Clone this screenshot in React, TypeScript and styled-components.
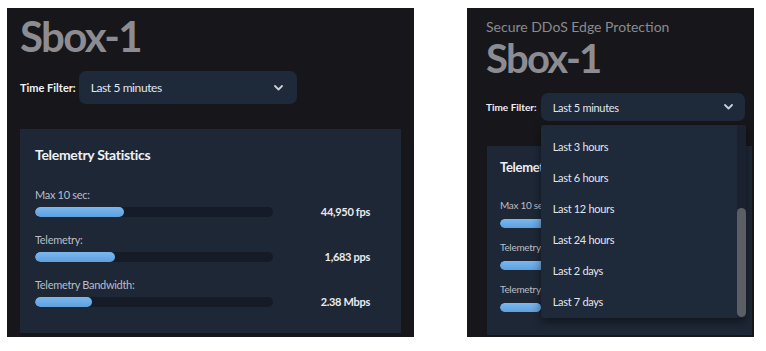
import styled, { createGlobalStyle } from "styled-components";

const GlobalStyle = createGlobalStyle`
	body {
		margin: 0;
		background: #ffffff;
		font-family: Lato, "Open Sans", sans-serif;
	}
`;

type Size = { $compact?: boolean };

// the dropdown in the screenshot is scrolled down to these
const OPTIONS = ["Last 3 hours", "Last 6 hours", "Last 12 hours", "Last 24 hours", "Last 2 days", "Last 7 days"];

const STATS = [
	{ label: "Max 10 sec:", value: "44,950 fps", fill: 37.4 },
	{ label: "Telemetry:", value: "1,683 pps", fill: 33.6 },
	{ label: "Telemetry Bandwidth:", value: "2.38 Mbps", fill: 24 },
];

const Chevron = () => (
	<svg width="9" height="6" viewBox="0 0 9 6" fill="none">
		<polyline points="1,1 4.5,4.5 8,1" stroke="#c9ced8" strokeWidth="1.8" strokeLinecap="round" strokeLinejoin="round" />
	</svg>
);

const OptionList = () => (
	<Menu>
		<MenuList>
			{OPTIONS.map(o => (
				<MenuItem key={o}>{o}</MenuItem>
			))}
		</MenuList>
		<ScrollTrack>
			<ScrollThumb />
		</ScrollTrack>
	</Menu>
);

const Dashboard = ({ compact, open }: { compact?: boolean; open?: boolean }) => (
	<Panel $compact={compact}>
		{compact && <Subtitle>Secure DDoS Edge Protection</Subtitle>}
		<Title $compact={compact}>Sbox-1</Title>
		<FilterRow $compact={compact}>
			<FilterLabel $compact={compact}>Time Filter:</FilterLabel>
			<SelectWrap>
				<Select $compact={compact}>
					<span>Last 5 minutes</span>
					<Chevron />
				</Select>
				{open && <OptionList />}
			</SelectWrap>
		</FilterRow>
		<Card $compact={compact}>
			<CardTitle $compact={compact}>Telemetry Statistics</CardTitle>
			<Stats $compact={compact}>
				{STATS.map(s => (
					<Stat key={s.label} $compact={compact}>
						<StatLabel $compact={compact}>{s.label}</StatLabel>
						<BarLine $compact={compact}>
							<Track $compact={compact}>
								<Fill style={{ width: `${s.fill}%` }} />
							</Track>
							<Value $compact={compact}>{s.value}</Value>
						</BarLine>
					</Stat>
				))}
			</Stats>
		</Card>
	</Panel>
);

const App = () => (
	<>
		<GlobalStyle />
		<Page>
			<Dashboard />
			<Dashboard compact open />
		</Page>
	</>
);

export default App;

const Page = styled.div`
	display: flex;
	gap: 53px;
	padding: 8px 0 0 7px;
`;

const Panel = styled.div<Size>`
	display: flex;
	flex-direction: column;
	box-sizing: border-box;
	width: ${p => (p.$compact ? 287 : 407)}px;
	height: 329px;
	padding: ${p => (p.$compact ? "12px 2px 2px 19px" : "3px 13px 0")};
	background: #17171b;
	overflow: hidden;
`;

const Subtitle = styled.div`
	font-size: 14px;
	line-height: 14px;
	color: #8a8a90;
`;

const Title = styled.h1<Size>`
	margin: 0;
	padding-right: 4px;
	font-size: ${p => (p.$compact ? 40 : 42)}px;
	line-height: 1.2;
	font-weight: 700;
	letter-spacing: -1.7px;
	color: #8c8c92;
`;

const FilterRow = styled.div<Size>`
	display: flex;
	align-items: center;
	gap: ${p => (p.$compact ? 4 : 3)}px;
	margin-top: ${p => (p.$compact ? 11 : 10)}px;
`;

const FilterLabel = styled.span<Size>`
	font-size: ${p => (p.$compact ? 10 : 11)}px;
	font-weight: 700;
	color: #eef0f3;
`;

const SelectWrap = styled.div`
	position: relative;
`;

const Select = styled.div<Size>`
	display: flex;
	align-items: center;
	justify-content: space-between;
	box-sizing: border-box;
	width: ${p => (p.$compact ? 204 : 218)}px;
	height: ${p => (p.$compact ? 28 : 33)}px;
	padding: 0 ${p => (p.$compact ? 12 : 14)}px 0 12px;
	border-radius: 7px;
	background: #1e293a;
	font-size: ${p => (p.$compact ? 11 : 12)}px;
	letter-spacing: ${p => (p.$compact ? -0.3 : -0.4)}px;
	color: #e3e6eb;
`;

const Menu = styled.div`
	position: absolute;
	top: 32px;
	left: 0;
	z-index: 5;
	width: 205px;
	height: 193px;
	background: #1e293a;
	border-radius: 3px;
	box-shadow: 0 4px 10px rgba(0, 0, 0, 0.45);
	overflow: hidden;
`;

const MenuList = styled.ul`
	margin: 0;
	padding: 6px 0 0;
	list-style: none;
`;

const MenuItem = styled.li`
	height: 31px;
	line-height: 31px;
	padding-left: 12px;
	font-size: 11px;
	letter-spacing: -0.3px;
	color: #e3e6eb;
`;

const ScrollTrack = styled.div`
	position: absolute;
	top: 0;
	right: 0;
	bottom: 0;
	width: 9px;
	background: #1a2230;
`;

const ScrollThumb = styled.div`
	position: absolute;
	right: 0;
	bottom: 1px;
	width: 9px;
	height: 109px;
	border-radius: 5px;
	background: #5b5e65;
`;

const Card = styled.div<Size>`
	box-sizing: border-box;
	width: ${p => (p.$compact ? "auto" : "381px")};
	flex: ${p => (p.$compact ? 1 : "none")};
	margin: ${p => (p.$compact ? "25px 0 0 1px" : "25px 0 0")};
	padding: ${p => (p.$compact ? "13px 20px 0 13px" : "17px 31px 24px 15px")};
	background: #1e2736;
`;

const CardTitle = styled.div<Size>`
	font-size: ${p => (p.$compact ? 13 : 14)}px;
	line-height: ${p => (p.$compact ? 16 : 17)}px;
	font-weight: 700;
	letter-spacing: -0.3px;
	color: #eef0f3;
`;

const Stats = styled.div<Size>`
	display: flex;
	flex-direction: column;
	gap: ${p => (p.$compact ? 12 : 14)}px;
	margin-top: ${p => (p.$compact ? 24 : 24.5)}px;
`;

const Stat = styled.div<Size>`
	display: flex;
	flex-direction: column;
	gap: ${p => (p.$compact ? 6 : 4)}px;
`;

const StatLabel = styled.div<Size>`
	font-size: ${p => (p.$compact ? 10 : 11)}px;
	line-height: ${p => (p.$compact ? 12 : 13)}px;
	letter-spacing: -0.3px;
	color: #b9bdc6;
`;

const BarLine = styled.div<Size>`
	display: flex;
	align-items: center;
	height: ${p => (p.$compact ? 12 : 14)}px;
`;

const Track = styled.div<Size>`
	width: ${p => (p.$compact ? 170 : 238)}px;
	height: ${p => (p.$compact ? 9 : 10)}px;
	border-radius: 5px;
	background: #151c27;
	overflow: hidden;
`;

const Fill = styled.div`
	height: 100%;
	border-radius: 5px;
	background: linear-gradient(#7ab8ee, #5f9fdc);
`;

const Value = styled.span<Size>`
	flex: 1;
	text-align: right;
	font-size: 11px;
	font-weight: 700;
	letter-spacing: -0.3px;
	color: #e8eaee;
`;
